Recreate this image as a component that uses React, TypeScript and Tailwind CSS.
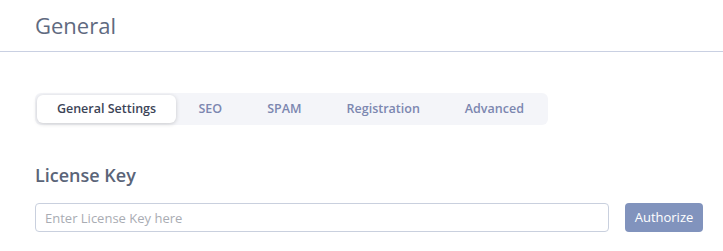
import { useState } from "react";

const tabs = ["General Settings", "SEO", "SPAM", "Registration", "Advanced"];

export default function App() {
  const [active, setActive] = useState("General Settings");
  const [licenseKey, setLicenseKey] = useState("");

  return (
    <div className="w-[723px] h-[251px] bg-white font-['Open_Sans',sans-serif]">
      <div className="h-[52px] border-b border-[#c9d0e2] pl-[35px] pt-[10px]">
        <h1 className="text-[22px] leading-[30px] text-[#5f6a80]">General</h1>
      </div>
      <div className="pl-[35px] pr-[20px]">
        <div className="mt-[41px] flex w-fit items-center rounded-md bg-[#f4f5f9] p-[2px]">
          {tabs.map((tab) => (
            <button
              key={tab}
              onClick={() => setActive(tab)}
              className={`h-[28px] shrink-0 rounded-md text-[12.5px] font-semibold ${
                active === tab
                  ? "w-[139px] bg-white text-[#3c4457] shadow-[0_1px_4px_rgba(0,0,0,0.18)]"
                  : "px-[22.5px] text-[#7c87b0]"
              }`}
            >
              {tab}
            </button>
          ))}
        </div>
        <h2 className="mt-[38px] text-[18px] leading-[24px] font-semibold text-[#5a6478]">
          License Key
        </h2>
        <div className="mt-[16px] flex items-center gap-[16px]">
          <input
            value={licenseKey}
            onChange={(e) => setLicenseKey(e.target.value)}
            placeholder="Enter License Key here"
            className="h-[29px] min-w-0 flex-1 rounded border border-[#c9d0de] px-[9px] text-[13px] text-[#444] outline-none placeholder:text-[#a9acb3]"
          />
          <button className="h-[29px] w-[78px] shrink-0 rounded bg-[#8193bd] text-[13px] text-white">
            Authorize
          </button>
        </div>
      </div>
    </div>
  );
}
